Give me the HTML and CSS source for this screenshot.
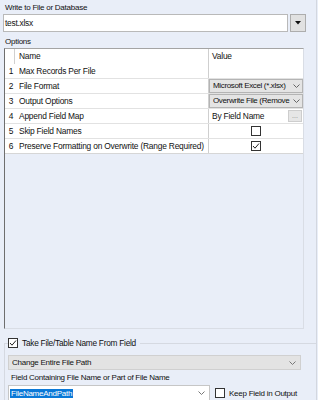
FILE: index.html
```html
<!DOCTYPE html>
<html>
<head>
<meta charset="utf-8">
<link rel="stylesheet" href="styles.css">
</head>
<body>
<div class="page">
  <div class="lbl lbl-top">Write to File or Database</div>
  <div class="file-row">
    <div class="textbox">test.xlsx</div>
    <div class="dropbtn"><svg width="6" height="4" viewBox="0 0 6 4"><path d="M0 0H6L3 3.5Z" fill="#111"/></svg></div>
  </div>
  <div class="lbl lbl-opt">Options</div>
  <div class="options">
    <div class="grid">
      <div class="row hdr">
        <div class="c-num"></div>
        <div class="c-name hname">Name</div>
        <div class="c-val">Value</div>
      </div>
      <div class="row first">
        <div class="c-num">1</div>
        <div class="c-name">Max Records Per File</div>
        <div class="c-val"></div>
      </div>
      <div class="row">
        <div class="c-num">2</div>
        <div class="c-name">File Format</div>
        <div class="c-val"><div class="cell-combo"><span>Microsoft Excel (*.xlsx)</span><svg class="chev" width="7" height="4" viewBox="0 0 7 4"><path d="M0.5 0.5L3.5 3.5L6.5 0.5" fill="none" stroke="#666" stroke-width="1"/></svg></div></div>
      </div>
      <div class="row">
        <div class="c-num">3</div>
        <div class="c-name">Output Options</div>
        <div class="c-val"><div class="cell-combo"><span>Overwrite File (Remove</span><svg class="chev" width="7" height="4" viewBox="0 0 7 4"><path d="M0.5 0.5L3.5 3.5L6.5 0.5" fill="none" stroke="#666" stroke-width="1"/></svg></div></div>
      </div>
      <div class="row">
        <div class="c-num">4</div>
        <div class="c-name">Append Field Map</div>
        <div class="c-val val-text"><span class="grow">By Field Name</span><span class="dots">...</span></div>
      </div>
      <div class="row">
        <div class="c-num">5</div>
        <div class="c-name">Skip Field Names</div>
        <div class="c-val val-center"><span class="cb"></span></div>
      </div>
      <div class="row last">
        <div class="c-num">6</div>
        <div class="c-name">Preserve Formatting on Overwrite (Range Required)</div>
        <div class="c-val val-center"><span class="cb"><svg width="8" height="8" viewBox="0 0 8 8"><path d="M1 4L3 6.2L7 1.5" fill="none" stroke="#222" stroke-width="1"/></svg></span></div>
      </div>
    </div>
  </div>
  <fieldset class="group">
    <legend class="legend"><span class="cb"><svg width="8" height="8" viewBox="0 0 8 8"><path d="M1 4L3 6.2L7 1.5" fill="none" stroke="#222" stroke-width="1"/></svg></span><span>Take File/Table Name From Field</span></legend>
    <div class="combo gray"><span class="grow">Change Entire File Path</span><svg class="chev" width="7" height="4" viewBox="0 0 7 4"><path d="M0.5 0.5L3.5 3.5L6.5 0.5" fill="none" stroke="#777" stroke-width="1"/></svg></div>
    <div class="lbl lbl-field">Field Containing File Name or Part of File Name</div>
    <div class="field-row">
      <div class="combo white"><span class="grow"><span class="sel">FileNameAndPath</span></span><svg class="chev" width="7" height="4" viewBox="0 0 7 4"><path d="M0.5 0.5L3.5 3.5L6.5 0.5" fill="none" stroke="#777" stroke-width="1"/></svg></div>
      <span class="cb"></span>
      <span class="keep">Keep Field in Output</span>
    </div>
  </fieldset>
</div>
</body>
</html>
```

FILE: styles.css
```css
html, body {
  margin: 0;
  padding: 0;
  background: #e9eef8;
}
body {
  font-family: "Liberation Sans", Arial, sans-serif;
  font-size: 8px;
  letter-spacing: -0.25px;
  color: #111;
  width: 318px;
  height: 400px;
  overflow: hidden;
}
.page {
  width: 316px;
  height: 400px;
  border-right: 1px solid #d3d7df;
}
.lbl {
  line-height: 12px;
  height: 12px;
  padding-left: 5px;
  white-space: nowrap;
}
.lbl-top {
  padding-top: 2px;
}
.file-row {
  display: flex;
  gap: 2px;
  padding-left: 3px;
  height: 18px;
}
.textbox {
  width: 282px;
  height: 16px;
  background: #fff;
  border: 1px solid #b9b9b9;
  line-height: 16px;
  padding-left: 1px;
  box-sizing: content-box;
  font-size: 8.4px;
}
.dropbtn {
  width: 14px;
  height: 16px;
  background: #e1e1e1;
  border: 1px solid #adadad;
  display: flex;
  align-items: center;
  justify-content: center;
}
.lbl-opt {
  margin-top: 4px;
}
.options {
  margin-left: 4px;
  width: 298px;
  height: 279px;
  border-left: 1px solid #6e6e6e;
  border-top: 1px solid #a4a4a4;
  border-right: 1px solid #d9dde5;
  border-bottom: 1px solid #d9dde5;
}
.grid {
  background: #fff;
  border-bottom: 1px solid #d6d6d6;
  font-size: 8.4px;
  letter-spacing: -0.2px;
}
.row {
  display: grid;
  grid-template-columns: 9px 194px 95px;
  height: 14px;
  border-top: 1px solid #e2e2e2;
  line-height: 14px;
}
.row.hdr {
  height: 15px;
  line-height: 15px;
  border-top: none;
}
.row.first {
  border-top: none;
}
.c-num {
  text-align: center;
  padding-left: 3px;
  box-sizing: border-box;
}
.c-name {
  padding-left: 5px;
  white-space: nowrap;
  overflow: hidden;
}
.hname {
  border-left: 1px solid #d0d0d0;
  padding-left: 4px;
}
.c-val {
  border-left: 1px solid #cfcfcf;
  padding-left: 3px;
  white-space: nowrap;
  overflow: hidden;
  display: flex;
  align-items: center;
}
.cell-combo {
  margin-left: -3px;
  flex: 1;
  height: 14px;
  box-sizing: border-box;
  background: #e4e4e4;
  border: 1px solid #b4b4b4;
  display: flex;
  align-items: center;
  padding: 0 2px 0 3px;
  overflow: hidden;
  line-height: 12px;
  font-size: 8px;
  letter-spacing: -0.35px;
}
.cell-combo span {
  flex: 1;
  overflow: hidden;
  white-space: nowrap;
}
.chev {
  flex: none;
  margin-left: 2px;
}
.grow {
  flex: 1;
  overflow: hidden;
  white-space: nowrap;
}
.val-text {
  padding-right: 1px;
}
.dots {
  width: 14px;
  height: 12px;
  box-sizing: border-box;
  background: #e6e6e6;
  border: 1px solid #cdcdcd;
  color: #888;
  font-size: 7px;
  line-height: 9px;
  text-align: center;
  letter-spacing: 0;
}
.val-center {
  justify-content: center;
  padding-left: 0;
}
.cb {
  width: 10px;
  height: 10px;
  box-sizing: border-box;
  border: 1px solid #333;
  background: #fff;
  display: inline-flex;
  align-items: center;
  justify-content: center;
  flex: none;
}
.group {
  margin: 8px 0 0 4px;
  padding: 0 14px 0 3px;
  border: none;
  border-top: 1px solid #d5d9e1;
  border-left: 1px solid #d5d9e1;
  min-width: 0;
}
.legend {
  padding: 0 4px 0 0;
  display: flex;
  align-items: center;
  gap: 4px;
  line-height: 12px;
  height: 12px;
  font-size: 8.3px;
}
.combo {
  height: 15px;
  box-sizing: border-box;
  display: flex;
  align-items: center;
  padding: 0 4px 0 3px;
  line-height: 13px;
}
.combo.gray {
  margin-top: 6px;
  background: #e3e3e3;
  border: 1px solid #d0d0d0;
  width: 293px;
}
.combo.white {
  background: #fff;
  border: 1px solid #c6c6c6;
  width: 202px;
  height: 16px;
  padding-left: 1px;
}
.sel {
  background: #0a78d7;
  color: #fff;
  padding: 0 1px;
}
.lbl-field {
  padding-left: 3px;
  margin-top: 2px;
}
.field-row {
  display: flex;
  align-items: center;
  gap: 4px;
  margin-top: 1px;
}
.field-row .cb {
  margin-left: 1px;
}
.keep {
  white-space: nowrap;
}
```
